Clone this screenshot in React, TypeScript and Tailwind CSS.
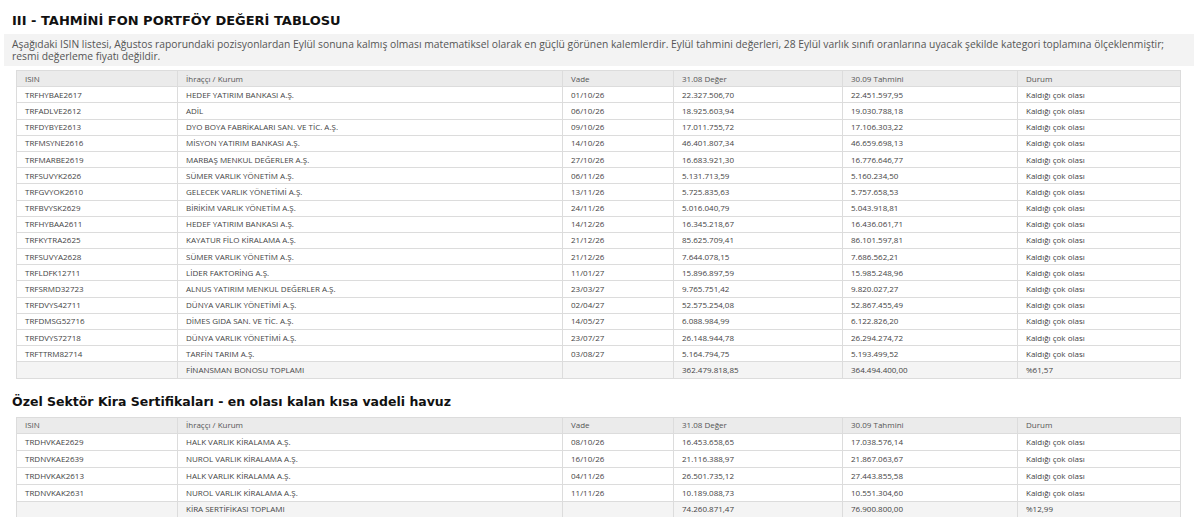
const rows1 = [
["TRFHYBAE2617","HEDEF YATIRIM BANKASI A.Ş.","01/10/26","22.327.506,70","22.451.597,95"],
["TRFADLVE2612","ADİL","06/10/26","18.925.603,94","19.030.788,18"],
["TRFDYBYE2613","DYO BOYA FABRİKALARI SAN. VE TİC. A.Ş.","09/10/26","17.011.755,72","17.106.303,22"],
["TRFMSYNE2616","MİSYON YATIRIM BANKASI A.Ş.","14/10/26","46.401.807,34","46.659.698,13"],
["TRFMARBE2619","MARBAŞ MENKUL DEĞERLER A.Ş.","27/10/26","16.683.921,30","16.776.646,77"],
["TRFSUVYK2626","SÜMER VARLIK YÖNETİM A.Ş.","06/11/26","5.131.713,59","5.160.234,50"],
["TRFGVYOK2610","GELECEK VARLIK YÖNETİMİ A.Ş.","13/11/26","5.725.835,63","5.757.658,53"],
["TRFBVYSK2629","BİRİKİM VARLIK YÖNETİM A.Ş.","24/11/26","5.016.040,79","5.043.918,81"],
["TRFHYBAA2611","HEDEF YATIRIM BANKASI A.Ş.","14/12/26","16.345.218,67","16.436.061,71"],
["TRFKYTRA2625","KAYATUR FİLO KİRALAMA A.Ş.","21/12/26","85.625.709,41","86.101.597,81"],
["TRFSUVYA2628","SÜMER VARLIK YÖNETİM A.Ş.","21/12/26","7.644.078,15","7.686.562,21"],
["TRFLDFK12711","LİDER FAKTORİNG A.Ş.","11/01/27","15.896.897,59","15.985.248,96"],
["TRFSRMD32723","ALNUS YATIRIM MENKUL DEĞERLER A.Ş.","23/03/27","9.765.751,42","9.820.027,27"],
["TRFDVYS42711","DÜNYA VARLIK YÖNETİMİ A.Ş.","02/04/27","52.575.254,08","52.867.455,49"],
["TRFDMSG52716","DİMES GIDA SAN. VE TİC. A.Ş.","14/05/27","6.088.984,99","6.122.826,20"],
["TRFDVYS72718","DÜNYA VARLIK YÖNETİMİ A.Ş.","23/07/27","26.148.944,78","26.294.274,72"],
["TRFTTRM82714","TARFİN TARIM A.Ş.","03/08/27","5.164.794,75","5.193.499,52"],
];
const rows2 = [
["TRDHVKAE2629","HALK VARLIK KİRALAMA A.Ş.","08/10/26","16.453.658,65","17.038.576,14"],
["TRDNVKAE2639","NUROL VARLIK KİRALAMA A.Ş.","16/10/26","21.116.388,97","21.867.063,67"],
["TRDHVKAK2613","HALK VARLIK KİRALAMA A.Ş.","04/11/26","26.501.735,12","27.443.855,58"],
["TRDNVKAK2631","NUROL VARLIK KİRALAMA A.Ş.","11/11/26","10.189.088,73","10.551.304,60"],
];
const td = "border border-[#dcdcdc] px-[8px] py-0 align-middle";
function Table({ rows, total, h }: { rows: string[][]; total: string[]; h: string }) {
  const cls = `${td} ${h}`;
  return (
    <table className="w-[1164px] ml-[16px] border-collapse text-[8px] text-[#444] leading-none" style={{ tableLayout: "fixed", fontFamily: '"Open Sans", sans-serif' }}>
      <colgroup>
        <col style={{ width: 161 }} /><col style={{ width: 385 }} /><col style={{ width: 111 }} />
        <col style={{ width: 169 }} /><col style={{ width: 175 }} /><col style={{ width: 163 }} />
      </colgroup>
      <thead>
        <tr className="bg-[#ebebeb] text-[#555]">
          {["ISIN","İhraççı / Kurum","Vade","31.08 Değer","30.09 Tahmini","Durum"].map(c => <td key={c} className={cls}>{c}</td>)}
        </tr>
      </thead>
      <tbody>
        {rows.map(r => (
          <tr key={r[0]} className="bg-white">
            {r.map((c, i) => <td key={i} className={cls}>{c}</td>)}
            <td className={cls}>Kaldığı çok olası</td>
          </tr>
        ))}
        <tr className="bg-[#f4f4f4]">
          <td className={cls}></td><td className={cls}>{total[0]}</td><td className={cls}></td>
          <td className={cls}>{total[1]}</td><td className={cls}>{total[2]}</td><td className={cls}>{total[3]}</td>
        </tr>
      </tbody>
    </table>
  );
}
export default function App() {
  return (
    <div className="w-[1200px] h-[517px] bg-white overflow-hidden" style={{ fontFamily: '"DejaVu Sans", sans-serif' }}>
      <h1 className="pt-[13px] pl-[12px] text-[13px] font-bold text-[#111] leading-[16px]">III - TAHMİNİ FON PORTFÖY DEĞERİ TABLOSU</h1>
      <div className="mt-[5px] ml-[4px] w-[1190px] h-[32px] bg-[#f3f3f3] px-[8px] py-[4px] text-[10.3px] leading-[12px] text-[#555]" style={{ fontFamily: '"Open Sans", sans-serif' }}>
        Aşağıdaki ISIN listesi, Ağustos raporundaki pozisyonlardan Eylül sonuna kalmış olması matematiksel olarak en güçlü görünen kalemlerdir. Eylül tahmini değerleri, 28 Eylül varlık sınıfı oranlarına uyacak şekilde kategori toplamına ölçeklenmiştir; resmi değerleme fiyatı değildir.
      </div>
      <div className="mt-[4px]">
        <Table rows={rows1} total={["FİNANSMAN BONOSU TOPLAMI","362.479.818,85","364.494.400,00","%61,57"]} h="h-[16.2px]" />
      </div>
      <h2 className="mt-[15px] pl-[12px] text-[12.5px] font-bold text-[#111] leading-[16px]">Özel Sektör Kira Sertifikaları - en olası kalan kısa vadeli havuz</h2>
      <div className="mt-[7px]">
        <Table rows={rows2} total={["KİRA SERTİFİKASI TOPLAMI","74.260.871,47","76.900.800,00","%12,99"]} h="h-[16.8px]" />
      </div>
    </div>
  );
}
